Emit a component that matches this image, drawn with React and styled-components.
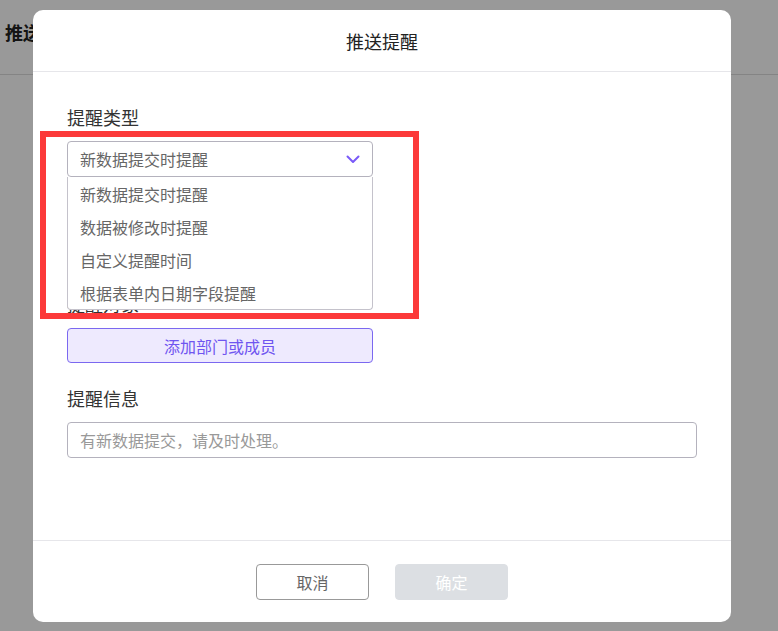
import styled, { createGlobalStyle } from "styled-components";

const GlobalStyle = createGlobalStyle`
  html, body {
    margin: 0;
    padding: 0;
    background: #fff;
    font-family: "Noto Sans CJK SC", "Noto Sans", sans-serif;
  }
`;

const Page = styled.div`
  position: relative;
  width: 778px;
  height: 631px;
  overflow: hidden;
  background: #fff;
`;

const PageHeader = styled.header`
  height: 75px;
  box-sizing: border-box;
  padding: 19px 5px 0;
  border-bottom: 1px solid #ddd;
  font-size: 18px;
  font-weight: 700;
  line-height: 26px;
  color: #222;
`;

const Backdrop = styled.div`
  position: absolute;
  inset: 0;
  background: rgba(0, 0, 0, 0.4);
  padding: 10px 0 0 33px;
`;

const Dialog = styled.section`
  position: relative;
  width: 698px;
  height: 612px;
  background: #fff;
  border-radius: 10px;
  display: flex;
  flex-direction: column;
`;

const DialogHeader = styled.div`
  height: 61px;
  border-bottom: 1px solid #e6e6ea;
  display: flex;
  align-items: center;
  justify-content: center;
  font-size: 18px;
  color: #222;
`;

const Body = styled.div`
  flex: 1;
  padding: 33px 34px 0;
`;

const Field = styled.div`
  position: relative;
  margin-bottom: ${(p) => p.$gap ?? 22}px;
  width: ${(p) => (p.$wide ? "630px" : "306px")};
`;

const Label = styled.div`
  font-size: 18px;
  line-height: 24px;
  color: #333;
  margin-bottom: 12px;
  visibility: ${(p) => (p.$covered ? "hidden" : "visible")};
`;

const Box = styled.div`
  box-sizing: border-box;
  height: 36px;
  border: 1px solid #b4b2bd;
  border-radius: 4px;
  display: flex;
  align-items: center;
  justify-content: space-between;
  padding: 0 12px;
  font-size: 16px;
  color: ${(p) => (p.$placeholder ? "#999" : "#666")};
  background: #fff;
`;

const AddButton = styled.button`
  box-sizing: border-box;
  width: 100%;
  height: 35px;
  border: 1px solid #7b68f0;
  border-radius: 4px;
  background: #eeeafe;
  color: #6f55f0;
  font-family: inherit;
  font-size: 16px;
  cursor: pointer;
`;

const Menu = styled.ul`
  position: absolute;
  left: 0;
  right: 0;
  top: 72px;
  margin: 0;
  padding: 1px 0 0;
  list-style: none;
  box-sizing: border-box;
  height: 133px;
  border: 1px solid #c4c2cb;
  border-top: none;
  border-radius: 0 0 4px 4px;
  background: #fff;
  z-index: 2;
`;

const Option = styled.li`
  height: 33px;
  line-height: 33px;
  padding: 0 12px;
  font-size: 16px;
  color: #666;
`;

const Footer = styled.div`
  height: 82px;
  box-sizing: border-box;
  border-top: 1px solid #e6e6ea;
  display: flex;
  justify-content: center;
  gap: 26px;
  padding-top: 23px;
`;

const FooterButton = styled.button`
  box-sizing: border-box;
  width: 113px;
  height: 36px;
  border-radius: 4px;
  font-family: inherit;
  font-size: 16px;
  border: 1px solid ${(p) => (p.$primary ? "#dcdfe3" : "#999")};
  background: ${(p) => (p.$primary ? "#dcdfe3" : "#fff")};
  color: ${(p) => (p.$primary ? "#fff" : "#666")};
`;

const Highlight = styled.div`
  position: absolute;
  left: 7px;
  top: 121px;
  width: 379px;
  height: 188px;
  border: 6px solid #fc3a3a;
  box-sizing: border-box;
  z-index: 3;
  pointer-events: none;
`;

const Chevron = () => (
  <svg width="14" height="9" viewBox="0 0 14 9">
    <path
      d="M1.5 1.5 L7 7 L12.5 1.5"
      fill="none"
      stroke="#7a5af8"
      strokeWidth="2"
      strokeLinecap="round"
      strokeLinejoin="round"
    />
  </svg>
);

const options = [
  "新数据提交时提醒",
  "数据被修改时提醒",
  "自定义提醒时间",
  "根据表单内日期字段提醒",
];

export default function App() {
  return (
    <Page>
      <GlobalStyle />
      <PageHeader>推送提醒</PageHeader>
      <Backdrop>
        <Dialog>
          <DialogHeader>推送提醒</DialogHeader>
          <Body>
            <Field>
              <Label>提醒类型</Label>
              <Box>
                <span>新数据提交时提醒</span>
                <Chevron />
              </Box>
              <Menu>
                {options.map((o) => (
                  <Option key={o}>{o}</Option>
                ))}
              </Menu>
            </Field>
            {/* field hidden under the open menu */}
            <Field $gap={21}>
              <Label $covered>提醒时间</Label>
              <Box />
            </Field>
            <Field $gap={23}>
              <Label>提醒对象</Label>
              <AddButton>添加部门或成员</AddButton>
            </Field>
            <Field $wide>
              <Label>提醒信息</Label>
              <Box $placeholder>有新数据提交，请及时处理。</Box>
            </Field>
          </Body>
          <Footer>
            <FooterButton>取消</FooterButton>
            <FooterButton $primary>确定</FooterButton>
          </Footer>
          <Highlight />
        </Dialog>
      </Backdrop>
    </Page>
  );
}
